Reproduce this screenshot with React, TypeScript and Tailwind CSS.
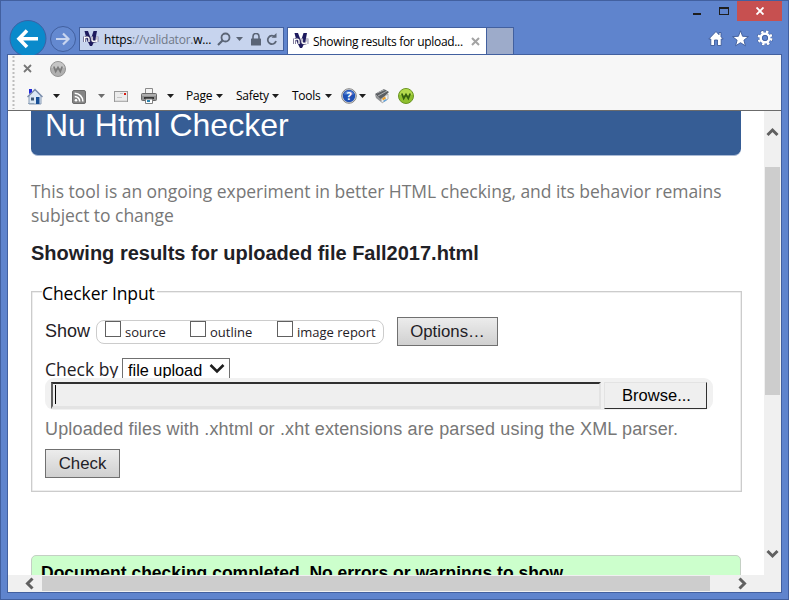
import React from "react";

const UI = "font-['Open_Sans','Noto_Sans',sans-serif]";
const ARIAL = "font-['Liberation_Sans',Arial,sans-serif]";

function NuLogo() {
  return (
    <svg width="16" height="16" viewBox="0 0 16 16" className="shrink-0">
      <path d="M1.500 0h3.500L8 8l2.500-8H14l-1.500 8L9 15H7L3.500 8z" fill="#1d1a5e" />
      <path d="M1.500 11V5.500M1.500 7.500C2.500 5.500 6 5.500 6 8V11M9 5.500v3.200C9 11 13 11 13.700 9M14 5.500V11" fill="none" stroke="#4d4874" strokeWidth="2.600" />
      <path d="M1.500 11V5.500M1.500 7.500C2.500 5.500 6 5.500 6 8V11M9 5.500v3.200C9 11 13 11 13.700 9M14 5.500V11" fill="none" stroke="#fff" strokeWidth="1.300" />
    </svg>
  );
}

function Caret({ color = "#1e1e1e" }: { color?: string }) {
  return (
    <svg width="7" height="4" viewBox="0 0 7 4" className="shrink-0">
      <path d="M0 0h7L3.500 4z" fill={color} />
    </svg>
  );
}

function BackButton() {
  return (
    <svg width="38" height="36" viewBox="0 0 38 36" className="mt-[19px] shrink-0">
      <circle cx="19" cy="19.500" r="18" fill="#0a8acb" stroke="#3b62a5" />
      <path d="M29 19.700H10.500M18 11.500l-8 8.200 8 8.200" fill="none" stroke="#fff" strokeWidth="3.600" />
    </svg>
  );
}

function ForwardButton() {
  return (
    <svg width="28" height="28" viewBox="0 0 28 28" className="ml-[2px] mt-[25px] shrink-0">
      <circle cx="14" cy="14" r="12.500" fill="#6489d0" stroke="#42609f" />
      <path d="M7 14h13M14 8.500l5.500 5.500-5.500 5.500" fill="none" stroke="#c8d5ef" strokeWidth="2.200" />
    </svg>
  );
}

function WBadge({ green }: { green?: boolean }) {
  return (
    <svg width="16" height="16" viewBox="0 0 16 16" className="shrink-0">
      <circle cx="8" cy="8" r="7.500" fill={green ? "#8fc02f" : "#b0b0b0"} stroke={green ? "#6a9423" : "#949494"} />
      <path d="M1.500 7a6.500 6 0 0 1 13 0z" fill={green ? "#b4da4e" : "#c6c6c6"} />
      <path d="M3.800 5.500l1.900 5L8 6.500l2.300 4 1.900-5" fill="none" stroke={green ? "#35600f" : "#7c7c7c"} strokeWidth="1.700" />
    </svg>
  );
}

function HouseIcon() {
  return (
    <svg width="16" height="17" viewBox="0 0 16 17" className="shrink-0">
      <path d="M2 8l6-6 6 6v8H2z" fill="#dbe8f5" stroke="#8a9cb5" />
      <path d="M.500 9L8 1.500 15.500 9" fill="none" stroke="#7b8dab" strokeWidth="1.500" />
      <path d="M2 1h3v3L2 6z" fill="#2229d8" />
      <path d="M9 9h3.500v7H9z" fill="#174f96" />
      <path d="M4 9.500h3v3H4z" fill="#3e5875" />
      <path d="M1 15.500h6" stroke="#8fa4ba" />
    </svg>
  );
}

function RssIcon() {
  return (
    <svg width="14" height="14" viewBox="0 0 14 14" className="shrink-0">
      <rect x=".500" y=".500" width="13" height="13" rx="1.500" fill="#858585" stroke="#6d6d6d" />
      <circle cx="4" cy="10.300" r="1.300" fill="#fff" />
      <path d="M2.700 6.400a5 5 0 0 1 5 5M2.700 3.200a8.200 8.200 0 0 1 8.200 8.200" fill="none" stroke="#fff" strokeWidth="1.500" />
    </svg>
  );
}

function MailIcon() {
  return (
    <svg width="14" height="11" viewBox="0 0 14 11" className="shrink-0">
      <rect x=".500" y=".500" width="13" height="10" fill="#ececec" stroke="#999" />
      <path d="M1 10h12" stroke="#c9c9c9" />
      <path d="M10 2h2v2h-2z" fill="#d91b12" />
      <path d="M6 2.500h3M3 6.500h5" stroke="#c6c6c6" />
    </svg>
  );
}

function PrinterIcon() {
  return (
    <svg width="16" height="16" viewBox="0 0 16 16" className="shrink-0">
      <path d="M4.500 6V.500h7V6" fill="#f4f4f4" stroke="#8b8b8b" />
      <rect x=".500" y="5.500" width="15" height="7" rx="1" fill="#929292" stroke="#696969" />
      <path d="M1 7h14" stroke="#c9c9c9" />
      <path d="M3 9h10v2H3z" fill="#353535" />
      <path d="M4.500 11h7v4.500h-7z" fill="#fff" stroke="#818181" />
      <path d="M6 12h3v2H6z" fill="#2f87b1" />
    </svg>
  );
}

function HelpIcon() {
  return (
    <svg width="16" height="16" viewBox="0 0 16 16" className="shrink-0">
      <circle cx="8" cy="8" r="7.300" fill="#ddd" stroke="#858585" />
      <circle cx="8" cy="8" r="6.200" fill="#1f50b5" />
      <path d="M3 6.500a5.200 5 0 0 1 10 0z" fill="#557fd0" />
      <text x="8" y="12" textAnchor="middle" fontSize="11" fontWeight="bold" fill="#fff" fontFamily="Open Sans">?</text>
    </svg>
  );
}

function ToolIcon() {
  return (
    <svg width="15" height="16" viewBox="0 0 15 16" className="shrink-0">
      <path d="M0 6l9-5 5 3-8 8z" fill="#5c5f63" />
      <path d="M2 5l8-3.500M3 8l9-5" stroke="#aeb0b2" />
      <path d="M0 6.500l6 4.500v3L1 10z" fill="#909294" />
      <path d="M6 11l7-5v5l-6 4z" fill="#f3f3f3" stroke="#999" strokeWidth=".700" />
      <path d="M7 10.500l3-2 1 2-3 2z" fill="#eaa133" />
      <path d="M8 13l3-2 1 1-3 2z" fill="#5ca2df" />
    </svg>
  );
}

function Chevron({ d }: { d: string }) {
  return (
    <svg width="17" height="17" viewBox="0 0 17 17" className="shrink-0">
      <path d={d} fill="none" stroke="#606060" strokeWidth="3" />
    </svg>
  );
}

function TitleBar() {
  return (
    <header className={`flex h-[54px] pl-[9px] ${UI}`}>
      <BackButton />
      <ForwardButton />
      <div className="ml-[2px] mt-[27px] flex h-6 w-[205px] shrink-0 items-center border border-[#42609f] bg-[#c7d4ee] pl-[3px]">
        <NuLogo />
        <span className="ml-[5px] mt-[2px] w-[109px] shrink-0 whitespace-nowrap text-[12px] leading-[20px] tracking-[-0.22px] text-black">
          https<span className="text-[#707887]">://validator.</span>w...
        </span>
        <svg width="14" height="14" viewBox="0 0 14 14" className="ml-[4px] shrink-0">
          <circle cx="8.500" cy="5.500" r="4" fill="none" stroke="#5b6576" strokeWidth="1.800" />
          <path d="M5.500 8.500L1 13" stroke="#5b6576" strokeWidth="2.200" />
        </svg>
        <span className="ml-[5px]"><Caret color="#5b6576" /></span>
        <svg width="12" height="13" viewBox="0 0 12 13" className="ml-[7px] shrink-0">
          <path d="M3 6V3.500a3 3 0 0 1 6 0V6" fill="none" stroke="#5b6576" strokeWidth="1.600" />
          <rect x="1" y="5.500" width="10" height="7" rx=".500" fill="#5b6576" />
        </svg>
        <svg width="12" height="13" viewBox="0 0 12 13" className="ml-[4px] shrink-0">
          <path d="M9 4A4.200 4.200 0 1 0 10 8" fill="none" stroke="#5b6576" strokeWidth="1.800" />
          <path d="M5.500 4.800h5V0z" fill="#5b6576" />
        </svg>
      </div>
      <div className="ml-[3px] mt-[27px] flex h-[27px] w-[200px] shrink-0 items-center border border-b-0 border-[#42609f] bg-white pl-[5px]">
        <NuLogo />
        <span className="ml-[4px] mt-[2px] w-[152px] shrink-0 whitespace-nowrap text-[12px] leading-[20px] tracking-[-0.32px] text-black">Showing results for upload...</span>
        <svg width="9" height="9" viewBox="0 0 9 9" className="ml-[6px] shrink-0"><path d="M1 1l7 7M8 1L1 8" stroke="#a3a3a3" strokeWidth="2" /></svg>
      </div>
      <div className="mt-[27px] h-[27px] w-[27px] shrink-0 border border-b-0 border-l-0 border-[#42609f] bg-[#9dabca]" />
      <div className="flex flex-1 flex-col items-end">
        <div className="flex h-[21px] pr-[7px] pt-px">
          <svg width="45" height="20" viewBox="0 0 45 20"><path d="M1 12h8v2H1z" fill="#1e1e1e" /><path d="M27 6h10v8H27zM28 8v5h8V8z" fillRule="evenodd" fill="#1e1e1e" /></svg>
          <div className="flex h-5 w-[45px] items-center justify-center bg-[#c75050]">
            <svg width="8" height="8" viewBox="0 0 8 8"><path d="M.500.500l7 7M7.500.500l-7 7" stroke="#fff" strokeWidth="1.900" /></svg>
          </div>
        </div>
        <div className="mt-[9px] flex gap-[8px] pr-[16px]">
          <svg width="16" height="17" viewBox="0 0 16 17"><path d="M8 1.500L.800 9h2v6.500h3.700V10h3v5.500h3.700V9h2L13 6.700V2.500h-2V4.700z" fill="#fff" stroke="#3c5a98" strokeWidth=".900" /></svg>
          <svg width="17" height="17" viewBox="0 0 17 17"><path d="M8.500.800l2.100 5.500 5.800.300-4.500 3.600 1.500 5.600-4.900-3.100-4.900 3.100 1.500-5.600L.600 6.600l5.800-.300z" fill="#fff" stroke="#3c5a98" strokeWidth=".900" /></svg>
          <svg width="16" height="17" viewBox="0 0 16 17">
            <circle cx="8" cy="8" r="6.300" fill="none" stroke="#3c5a98" strokeWidth="3.500" strokeDasharray="2.900 2.048" />
            <circle cx="8" cy="8" r="6.300" fill="none" stroke="#fff" strokeWidth="2.400" strokeDasharray="2.400 2.548" strokeDashoffset="-.25" />
            <circle cx="8" cy="8" r="4.300" fill="none" stroke="#fff" strokeWidth="2.500" />
            <circle cx="8" cy="8" r="2.700" fill="none" stroke="#3c5a98" strokeWidth=".800" />
          </svg>
        </div>
      </div>
    </header>
  );
}

function Toolbars() {
  return (
    <div className={`flex h-14 border-b border-[#6b6b6b] bg-[#f7f7f7] pl-1 text-black ${UI}`}>
      <svg width="3" height="54" viewBox="0 0 3 54"><path d="M1.500 1v53" stroke="#bdbdbd" strokeWidth="2" strokeDasharray="2 2" /></svg>
      <div className="flex flex-col">
        <div className="flex h-[27px] items-center pl-2">
          <svg width="9" height="9" viewBox="0 0 9 9"><path d="M1 1l7 7M8 1L1 8" stroke="#777" strokeWidth="1.800" /></svg>
          <span className="ml-[18px]"><WBadge /></span>
        </div>
        <div className="flex h-7 items-center pl-3 text-[12px] leading-[20px] tracking-[-0.25px]">
          <HouseIcon />
          <span className="ml-[10px]"><Caret /></span>
          <span className="ml-[12px] mt-[2px]"><RssIcon /></span>
          <span className="ml-[12px]"><Caret color="#6d6d6d" /></span>
          <span className="ml-[9px]"><MailIcon /></span>
          <span className="ml-[13px]"><PrinterIcon /></span>
          <span className="ml-[10px]"><Caret /></span>
          <span className="ml-[12px] w-[28px] whitespace-nowrap">Page</span>
          <span className="ml-[2px]"><Caret /></span>
          <span className="ml-[13px] w-[33px] whitespace-nowrap">Safety</span>
          <span className="ml-[3px]"><Caret /></span>
          <span className="ml-[13px] w-[30px] whitespace-nowrap">Tools</span>
          <span className="ml-[3px]"><Caret /></span>
          <span className="ml-[9px]"><HelpIcon /></span>
          <span className="ml-[2px]"><Caret /></span>
          <span className="ml-[9px]"><ToolIcon /></span>
          <span className="ml-[8px]"><WBadge green /></span>
        </div>
      </div>
    </div>
  );
}

function Check({ label, width }: { label: string; width: string }) {
  return (
    <label className={`flex shrink-0 whitespace-nowrap ${width}`}>
      <span className="h-4 w-4 shrink-0 border border-[#606060] bg-white" />
      <span className="ml-1 mt-[1px] text-[13px] leading-[20px]">{label}</span>
    </label>
  );
}

function CheckerPage() {
  return (
    <main className="h-[464px] w-[756px] overflow-hidden bg-white pl-[23px] text-[#1f2126]">
      <div className={`flex h-[45px] w-[710px] rounded-b-[7px] border-b border-[#a9b9d4] bg-[#365d95] pl-[14px] ${ARIAL}`}>
        <h1 className="-mt-1 whitespace-nowrap text-[32px] leading-[36px] text-white">Nu Html Checker</h1>
      </div>
      <p className={`mt-[23px] whitespace-nowrap text-[17.500px] leading-6 tracking-[-0.04px] text-[#777] ${UI}`}>
        This tool is an ongoing experiment in better HTML checking, and its behavior remains<br />subject to change
      </p>
      <h2 className={`mt-[14px] whitespace-nowrap text-[20px] font-bold leading-6 ${ARIAL}`}>Showing results for uploaded file Fall2017.html</h2>
      <fieldset className="mt-[14px] h-[213px] w-[711px] border border-[#ccc] pl-[10px] shadow-[inset_0_0_0_0.5px_#ddd]">
        <legend className={`h-[25px] whitespace-nowrap bg-white pr-[2px] text-[17.500px] leading-[28px] tracking-[-0.1px] text-black ${UI}`}>Checker Input</legend>
        <div className="ml-[3px] mt-[13px] flex h-[29px]">
          <span className={`w-[51px] whitespace-nowrap text-[18px] leading-[28px] ${ARIAL}`}>Show</span>
          <div className={`mt-[3px] flex h-6 w-[288px] rounded-[8px] border border-[#ccc] pl-2 ${UI}`}>
            <Check label="source" width="w-[85px]" />
            <Check label="outline" width="w-[87px]" />
            <Check label="image report" width="w-[101px]" />
          </div>
          <button className={`ml-[13px] h-[29px] w-[101px] whitespace-nowrap border border-[#707070] bg-gradient-to-b from-[#ececec] to-[#d0d0d0] text-[16.800px] leading-[26px] ${ARIAL}`}>Options…</button>
        </div>
        <div className="ml-[3px] mt-3 flex h-5 overflow-hidden">
          <span className={`w-[77px] whitespace-nowrap text-[17.500px] leading-[23px] ${UI}`}>Check by</span>
          <div className={`flex h-7 w-[108px] whitespace-nowrap border border-[#707070] bg-white pl-[5px] text-[16.300px] leading-[22px] text-black ${ARIAL}`}>
            file upload
            <svg width="16" height="10" viewBox="0 0 16 10" className="ml-[7px] mt-[5px]"><path d="M1.500 1l6.500 6.500L14.500 1" fill="none" stroke="#1e1e1e" strokeWidth="2.600" /></svg>
          </div>
        </div>
        <div className="ml-[3px] flex h-8 w-[668px] rounded-[9px] bg-[#f1f1f1] pl-[6px] pt-[4px]">
          <div className="h-[27px] w-[550px] border-2 border-b-[3px] border-[#e3e3e3] border-l-[#606060] border-t-[#303030] bg-[#efefef] pt-px pl-[2px]">
            <div className="h-[19px] w-px bg-black" />
          </div>
          <button className={`ml-[3px] h-[27px] w-[103px] border border-[#e3e3e3] border-b-[#303030] border-r-[#303030] bg-[#efefef] pb-[2px] pl-[2px] text-[16.500px] leading-[22px] text-black ${ARIAL}`}>Browse...</button>
        </div>
        <p className={`ml-[3px] mt-[7px] whitespace-nowrap text-[18px] leading-6 tracking-[0.16px] text-[#777] ${ARIAL}`}>Uploaded files with .xhtml or .xht extensions are parsed using the XML parser.</p>
        <button className={`ml-[3px] mt-2 block h-[29px] w-[75px] border border-[#707070] bg-gradient-to-b from-[#ececec] to-[#d0d0d0] text-[16.800px] leading-[26px] ${ARIAL}`}>Check</button>
      </fieldset>
      <div className={`mt-[63px] h-[60px] w-[710px] rounded-[5px] border border-[#c4d0c4] bg-[#cfc] pl-[9px] pt-[5px] text-[17.500px] font-bold leading-6 text-black ${ARIAL}`}>Document checking completed. No errors or warnings to show.</div>
    </main>
  );
}

export default function App() {
  return (
    <div className="h-[600px] w-[789px] overflow-hidden border border-[#42609f] bg-[#5f84cd]">
      <div className="-ml-px -mt-px w-[789px]">
        <TitleBar />
        <div className="ml-[7px] h-[539px] w-[775px] border border-[#42609f] bg-[#f0f0f0]">
          <Toolbars />
          <div className="flex h-[464px]">
            <CheckerPage />
            <div className="flex w-[17px] flex-col items-center justify-between bg-[#f0f0f0] pb-[13px] pt-[13px]">
              <Chevron d="M3.500 11l5-5 5 5" />
              <div className="mb-[150px] mt-[26px] h-[228px] w-[15px] shrink-0 bg-[#cdcdcd]" />
              <Chevron d="M3.500 6l5 5 5-5" />
            </div>
          </div>
          <div className="flex h-[17px] items-center pl-[13px]">
            <Chevron d="M11.500 3.500l-5 5 5 5" />
            <div className="ml-1 h-[15px] w-[668px] bg-[#cdcdcd]" />
            <span className="ml-6"><Chevron d="M5.500 3.500l5 5-5 5" /></span>
          </div>
        </div>
      </div>
    </div>
  );
}
